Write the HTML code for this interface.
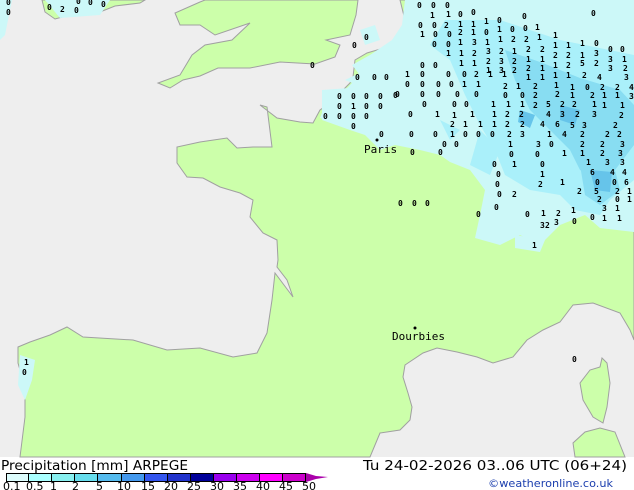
<!DOCTYPE html>
<html><head><meta charset="utf-8"><style>
html,body{margin:0;padding:0;background:#fff;}
body{width:634px;height:490px;overflow:hidden;position:relative;font-family:"Liberation Sans",sans-serif;}
svg{position:absolute;left:0;top:0;}
.n{font:bold 8px "DejaVu Sans Mono","Liberation Mono",monospace;fill:#000;}
</style></head><body>
<svg width="634" height="490" viewBox="0 0 634 490">
<rect x="0" y="0" width="634" height="457" fill="#eeeeee"/>
<g fill="#ccffaa" stroke="#a0a0a0" stroke-width="1">
<polygon points="42,0 145,0 140,3 115,6 100,12 70,15 55,19 45,12"/>
<polygon points="205,0 200,2 175,13 180,25 200,25 215,35 250,23 232,40 205,45 192,55 180,75 158,83 170,88 183,80 200,76 218,68 250,68 280,62 315,64 335,57 340,45 326,40 350,35 356,15 358,0"/>
<polygon points="400,0 634,0 634,340 630,330 620,313 593,303 573,305 560,322 543,330 527,340 513,357 493,363 477,357 457,352 437,348 423,353 405,365 403,377 408,393 412,407 410,420 400,430 380,433 370,457 20,457 25,417 25,387 18,363 18,347 30,342 50,335 67,327 83,337 133,340 167,350 200,348 233,357 257,353 267,333 272,300 275,273 293,297 287,280 277,267 278,260 277,240 263,233 250,217 253,200 240,193 220,187 203,178 187,177 177,163 177,147 200,142 227,138 237,148 253,147 272,147 267,107 260,105 277,118 300,122 313,123 320,110 330,103 350,83 353,77 355,60 367,53 387,47 400,40 405,20"/>
<polygon points="602,358 607,363 610,383 607,407 603,423 593,417 583,400 580,383 590,370 600,367"/>
<polygon points="575,457 573,443 585,432 600,428 615,432 625,457"/>
</g>
<g fill="#ccf8f8">
<polygon points="405,0 634,0 634,232 600,228 585,215 560,225 540,245 520,235 500,245 475,238 480,215 485,190 470,170 450,162 440,155 420,150 395,145 380,130 360,128 345,125 320,118 325,105 340,95 350,85 360,75 352,65 370,55 392,40 402,25"/>
<polygon points="345,80 370,68 390,80 370,90"/>
<polygon points="322,90 390,85 420,95 410,140 380,150 365,135 350,130 322,120"/>
<polygon points="515,235 545,240 540,252 515,248"/>
<polygon points="20,355 35,360 32,380 25,400 18,385"/>
<polygon points="0,0 12,0 5,35 0,40"/>
<polygon points="360,30 375,25 380,40 365,45"/>
<polygon points="45,0 110,0 100,15 60,18"/>
</g>
<g fill="#aaf0fa">
<polygon points="445,20 500,20 560,40 634,55 634,180 610,200 600,215 575,210 560,195 530,190 505,175 495,150 480,125 465,95 450,60 430,45"/>
<polygon points="480,130 500,150 490,175 470,165"/>
<polygon points="440,120 460,130 450,140"/>
</g>
<g fill="#88ddf2">
<polygon points="505,50 540,62 580,78 620,90 634,105 634,145 615,170 600,180 580,170 570,150 550,130 530,110 515,80"/>
<polygon points="580,165 615,170 620,190 600,205 585,195"/>
</g>
<g fill="#66c4ea">
<polygon points="590,170 612,172 610,192 595,190"/>
<polygon points="560,105 580,110 575,125 560,120"/>
<polygon points="520,110 535,115 530,128 518,122"/>
</g>
<g class="n">
<text x="417" y="8">0</text><text x="431" y="8">0</text><text x="445" y="8">0</text>
<text x="430" y="18">1</text><text x="446" y="17">1</text><text x="458" y="17">0</text><text x="471" y="15">0</text>
<text x="418" y="28">0</text><text x="432" y="28">0</text><text x="444" y="28">2</text><text x="458" y="27">1</text><text x="471" y="27">1</text><text x="484" y="24">1</text><text x="497" y="23">0</text><text x="522" y="19">0</text>
<text x="420" y="37">1</text><text x="433" y="37">0</text><text x="447" y="37">0</text><text x="458" y="35">2</text><text x="471" y="35">1</text><text x="484" y="35">0</text><text x="497" y="32">1</text><text x="510" y="32">0</text><text x="523" y="31">0</text><text x="535" y="30">1</text>
<text x="432" y="47">0</text><text x="446" y="47">0</text><text x="458" y="45">1</text><text x="472" y="45">3</text><text x="485" y="45">1</text><text x="498" y="42">1</text><text x="511" y="42">2</text><text x="524" y="42">2</text><text x="537" y="40">1</text><text x="553" y="38">1</text><text x="591" y="16">0</text>
<text x="446" y="56">1</text><text x="459" y="56">1</text><text x="472" y="56">2</text><text x="486" y="54">3</text><text x="499" y="54">2</text><text x="512" y="54">1</text><text x="526" y="52">2</text><text x="540" y="52">2</text><text x="553" y="48">1</text><text x="566" y="48">1</text><text x="580" y="46">1</text><text x="594" y="46">0</text><text x="608" y="52">0</text><text x="620" y="52">0</text>
<text x="459" y="66">1</text><text x="472" y="66">1</text><text x="486" y="64">2</text><text x="499" y="64">3</text><text x="512" y="64">2</text><text x="526" y="62">1</text><text x="540" y="62">1</text><text x="553" y="58">2</text><text x="566" y="58">2</text><text x="580" y="58">1</text><text x="594" y="56">3</text><text x="608" y="62">3</text><text x="622" y="62">1</text>
<text x="420" y="68">0</text><text x="433" y="68">0</text><text x="486" y="73">1</text><text x="499" y="73">3</text><text x="512" y="73">2</text><text x="526" y="71">2</text><text x="540" y="71">1</text><text x="553" y="68">1</text><text x="566" y="68">2</text><text x="580" y="66">5</text><text x="594" y="66">2</text><text x="608" y="71">3</text><text x="623" y="71">2</text>
<text x="405" y="77">1</text><text x="420" y="77">0</text><text x="446" y="77">0</text><text x="462" y="77">0</text><text x="474" y="77">2</text><text x="488" y="77">1</text><text x="502" y="77">1</text><text x="526" y="80">1</text><text x="540" y="80">1</text><text x="553" y="78">1</text><text x="566" y="78">1</text><text x="582" y="78">2</text><text x="597" y="80">4</text><text x="624" y="80">3</text>
<text x="405" y="87">0</text><text x="420" y="87">0</text><text x="436" y="87">0</text><text x="449" y="87">0</text><text x="462" y="87">1</text><text x="476" y="87">1</text><text x="503" y="89">2</text><text x="516" y="89">1</text><text x="533" y="89">2</text><text x="554" y="88">1</text><text x="570" y="90">1</text><text x="585" y="90">0</text><text x="600" y="90">2</text><text x="615" y="90">2</text><text x="629" y="90">4</text>
<text x="395" y="97">0</text><text x="420" y="97">0</text><text x="436" y="97">0</text><text x="455" y="97">0</text><text x="474" y="97">0</text><text x="503" y="98">0</text><text x="520" y="98">0</text><text x="533" y="98">2</text><text x="555" y="97">2</text><text x="570" y="98">1</text><text x="590" y="98">2</text><text x="602" y="98">1</text><text x="615" y="98">1</text><text x="629" y="99">3</text>
<text x="422" y="107">0</text><text x="452" y="107">0</text><text x="464" y="107">0</text><text x="491" y="107">1</text><text x="506" y="107">1</text><text x="520" y="107">1</text><text x="533" y="108">2</text><text x="546" y="107">5</text><text x="560" y="107">2</text><text x="572" y="107">2</text><text x="592" y="107">1</text><text x="602" y="108">1</text><text x="620" y="108">1</text>
<text x="408" y="117">0</text><text x="435" y="117">1</text><text x="452" y="118">1</text><text x="470" y="117">1</text><text x="492" y="117">1</text><text x="505" y="117">2</text><text x="519" y="117">2</text><text x="546" y="117">4</text><text x="560" y="117">3</text><text x="575" y="117">2</text><text x="592" y="117">3</text><text x="619" y="118">2</text>
<text x="450" y="127">2</text><text x="463" y="127">1</text><text x="478" y="127">1</text><text x="492" y="127">1</text><text x="505" y="127">2</text><text x="520" y="127">2</text><text x="540" y="127">4</text><text x="555" y="127">6</text><text x="570" y="128">5</text><text x="582" y="128">3</text><text x="613" y="128">2</text>
<text x="409" y="137">0</text><text x="433" y="137">0</text><text x="450" y="137">1</text><text x="463" y="137">0</text><text x="476" y="137">0</text><text x="490" y="137">0</text><text x="507" y="137">2</text><text x="520" y="137">3</text><text x="547" y="137">1</text><text x="562" y="137">4</text><text x="580" y="137">2</text><text x="605" y="137">2</text><text x="617" y="137">2</text>
<text x="442" y="147">0</text><text x="454" y="147">0</text><text x="508" y="147">1</text><text x="536" y="147">3</text><text x="549" y="147">0</text><text x="580" y="147">2</text><text x="600" y="147">2</text><text x="620" y="147">3</text>
<text x="410" y="155">0</text><text x="438" y="155">0</text><text x="509" y="157">0</text><text x="535" y="157">0</text><text x="562" y="156">1</text><text x="580" y="156">1</text><text x="600" y="156">2</text><text x="618" y="156">3</text>
<text x="492" y="167">0</text><text x="512" y="167">1</text><text x="540" y="167">0</text><text x="586" y="165">1</text><text x="605" y="165">3</text><text x="620" y="165">3</text>
<text x="496" y="177">0</text><text x="540" y="177">1</text><text x="590" y="175">6</text><text x="610" y="175">4</text><text x="622" y="175">4</text>
<text x="495" y="187">0</text><text x="538" y="187">2</text><text x="560" y="185">1</text><text x="595" y="185">0</text><text x="612" y="185">0</text><text x="624" y="185">6</text>
<text x="497" y="197">0</text><text x="512" y="197">2</text><text x="577" y="194">2</text><text x="594" y="194">5</text><text x="615" y="194">2</text><text x="627" y="194">1</text>
<text x="494" y="210">0</text><text x="541" y="216">1</text><text x="556" y="216">2</text><text x="571" y="213">1</text><text x="597" y="202">2</text><text x="615" y="202">0</text><text x="627" y="202">1</text>
<text x="525" y="217">0</text><text x="554" y="225">3</text><text x="572" y="224">0</text><text x="602" y="211">3</text><text x="615" y="211">1</text>
<text x="476" y="217">0</text><text x="540" y="228">3</text><text x="545" y="228">2</text><text x="590" y="220">0</text><text x="602" y="221">1</text><text x="617" y="221">1</text>
<text x="398" y="206">0</text><text x="412" y="206">0</text><text x="425" y="206">0</text><text x="532" y="248">1</text><text x="572" y="362">0</text>
<text x="355" y="80">0</text><text x="372" y="80">0</text><text x="384" y="80">0</text>
<text x="337" y="99">0</text><text x="351" y="99">0</text><text x="364" y="99">0</text><text x="378" y="99">0</text><text x="393" y="98">0</text>
<text x="337" y="109">0</text><text x="351" y="109">1</text><text x="364" y="109">0</text><text x="378" y="109">0</text>
<text x="323" y="119">0</text><text x="337" y="119">0</text><text x="351" y="119">0</text><text x="364" y="119">0</text>
<text x="351" y="129">0</text><text x="379" y="137">0</text><text x="310" y="68">0</text><text x="364" y="40">0</text><text x="352" y="48">0</text>
<text x="6" y="5">0</text><text x="6" y="15">0</text><text x="47" y="10">0</text><text x="60" y="12">2</text><text x="74" y="13">0</text><text x="76" y="4">0</text><text x="88" y="5">0</text><text x="101" y="7">0</text>
<text x="24" y="365">1</text><text x="22" y="375">0</text>
</g>
<g fill="#000"><circle cx="377" cy="140" r="1.5"/><circle cx="415" cy="328" r="1.5"/></g>
<text x="364" y="153" font-family="DejaVu Sans Mono, monospace" font-size="11" fill="#000">Paris</text>
<text x="392" y="340" font-family="DejaVu Sans Mono, monospace" font-size="11" fill="#000">Dourbies</text>
<g stroke="#000" stroke-width="1">
<rect x="6.5" y="473.5" width="22" height="8" fill="#ddfcfc"/>
<rect x="28.5" y="473.5" width="23" height="8" fill="#aaffff"/>
<rect x="51.5" y="473.5" width="23" height="8" fill="#88f0f0"/>
<rect x="74.5" y="473.5" width="23" height="8" fill="#66dded"/>
<rect x="97.5" y="473.5" width="24" height="8" fill="#55bbee"/>
<rect x="121.5" y="473.5" width="23" height="8" fill="#4499ee"/>
<rect x="144.5" y="473.5" width="23" height="8" fill="#3355ee"/>
<rect x="167.5" y="473.5" width="23" height="8" fill="#2233cc"/>
<rect x="190.5" y="473.5" width="23" height="8" fill="#000099"/>
<rect x="213.5" y="473.5" width="23" height="8" fill="#9900ee"/>
<rect x="236.5" y="473.5" width="23" height="8" fill="#cc00ee"/>
<rect x="259.5" y="473.5" width="23" height="8" fill="#ff00ff"/>
<rect x="282.5" y="473.5" width="23" height="8" fill="#cc00cc"/>
</g>
<polygon points="306,473 316,476 328,477 316,479 306,482" fill="#aa00aa"/>
<g font-family="DejaVu Sans, sans-serif" font-size="11" fill="#000">
<text x="3" y="490">0.1</text><text x="26" y="490">0.5</text><text x="50" y="490">1</text><text x="72" y="490">2</text><text x="96" y="490">5</text><text x="117" y="490">10</text><text x="141" y="490">15</text><text x="164" y="490">20</text><text x="187" y="490">25</text><text x="210" y="490">30</text><text x="233" y="490">35</text><text x="256" y="490">40</text><text x="279" y="490">45</text><text x="302" y="490">50</text>
</g>
<text x="1" y="470" font-family="DejaVu Sans, sans-serif" font-size="13.5" fill="#000" textLength="187" lengthAdjust="spacingAndGlyphs">Precipitation [mm] ARPEGE</text>
<text x="363" y="470" font-family="DejaVu Sans, sans-serif" font-size="13.5" fill="#000" textLength="264" lengthAdjust="spacingAndGlyphs">Tu 24-02-2026 03..06 UTC (06+24)</text>
<text x="488" y="487" font-family="DejaVu Sans, sans-serif" font-size="11" fill="#1c3fae" textLength="125" lengthAdjust="spacingAndGlyphs">©weatheronline.co.uk</text>
</svg>
</body></html>
